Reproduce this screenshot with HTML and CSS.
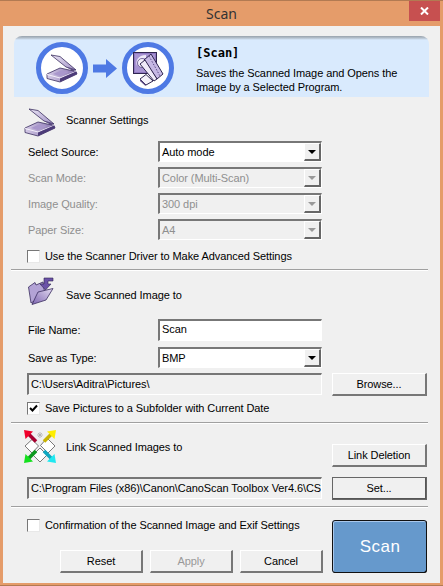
FILE: index.html
```html
<!DOCTYPE html>
<html lang="en">
<head>
<meta charset="utf-8">
<title>Scan</title>
<link rel="stylesheet" href="styles.css">
</head>
<body>
<svg class="defs" width="0" height="0" aria-hidden="true">
  <defs>
    <linearGradient id="lid" x1="0" y1="0" x2="1" y2="1"><stop offset="0" stop-color="#ebe6f5"/><stop offset="1" stop-color="#a090c6"/></linearGradient>
    <linearGradient id="body" x1="0" y1="0" x2="1" y2="0"><stop offset="0" stop-color="#d6cce8"/><stop offset="1" stop-color="#8470ac"/></linearGradient>
    <linearGradient id="folder" x1="0" y1="1" x2="1" y2="0"><stop offset="0" stop-color="#7d64b0"/><stop offset="1" stop-color="#e4dcf2"/></linearGradient>
    <g id="scanner">
      <path d="M5 1 L14 2.500 L30 16 L20 13 Z" fill="url(#lid)" stroke="#3b2f60" stroke-width=".8"/>
      <path d="M20 13 L30 16 L27 17 Z" fill="#5b4a86"/>
      <path d="M1 20 L14 14 L30 17.500 L31 20 L14 28 L1 24.500 Z" fill="url(#body)" stroke="#3a2d60" stroke-width=".8"/>
      <path d="M1 20.500 L14 24 L30 17.500" fill="none" stroke="#f3effa" stroke-width="1"/>
      <path d="M14 24.500 L14 28 L31 20 L30 17.500 Z" fill="#4c3b78"/>
      <path d="M7 20 L15 16.500 L23 18 L14 22 Z" fill="#a997cc"/>
    </g>
  </defs>
</svg>
<main class="window">
  <header class="titlebar">
    <span></span>
    <h1 class="title">Scan</h1>
    <span class="close"><svg width="9" height="8" viewBox="0 0 9 8"><path d="M1 0.500 L8 7.500 M8 0.500 L1 7.500" stroke="#fff" stroke-width="2"/></svg></span>
  </header>
  <div class="client">
    <section class="banner">
      <div class="flow">
        <span class="ring">
          <svg width="32" height="29" viewBox="0 0 32 29"><use href="#scanner"/></svg>
        </span>
        <svg class="arrow" width="24" height="19" viewBox="0 0 24 19"><path d="M0 5.500 H13 V0 L24 9.500 L13 19 V13.500 H0 Z" fill="#4e79e4"/></svg>
        <span class="ring">
          <svg width="36" height="36" viewBox="0 0 36 36">
            <rect x="3.500" y="2.500" width="23" height="21" fill="#8f78c0" stroke="#2f2550"/>
            <rect x="5" y="4" width="20" height="18" fill="#a793d2"/>
            <path d="M16 5 C8 5 5 11 7 16 C8 11 11 8 16 8 Z" fill="#eee9f8"/>
            <circle cx="12" cy="13" r="4.500" fill="#f2eefa" stroke="#4a3a78" stroke-width=".7"/>
            <path d="M14 10 L21 4 L33 24 L27 29 Z" fill="#c6b8e4" stroke="#2f2550"/>
            <path d="M19 6 L30 26" stroke="#5b4a86" stroke-width="1" stroke-dasharray="1.500 1.500"/>
            <path d="M10 14 L15 10 L27 29 L24 31 Z" fill="#efeaf8" stroke="#2f2550"/>
            <path d="M10 29 L16 24.500 L23 31 L16 35 Z" fill="#f5f2fa" stroke="#2f2550"/>
            <path d="M16 35 L10 29 L10 31 L15.500 36 Z" fill="#5b4a86"/>
          </svg>
        </span>
      </div>
      <div class="banner-text">
        <h2 class="banner-title">[Scan]</h2>
        <p class="banner-desc">Saves the Scanned Image and Opens the Image by a Selected Program.</p>
      </div>
    </section>

    <section class="group group-settings">
      <div class="group-head head-settings">
        <svg class="head-icon" width="32" height="29" viewBox="0 0 32 29"><use href="#scanner"/></svg>
        <span class="head-label label-up">Scanner Settings</span>
      </div>
      <div class="form-row">
        <label class="label">Select Source:</label>
        <div class="combo"><span class="combo-value">Auto mode</span><span class="combo-btn"><i class="tri"></i></span></div>
      </div>
      <div class="form-row is-disabled">
        <label class="label">Scan Mode:</label>
        <div class="combo"><span class="combo-value">Color (Multi-Scan)</span><span class="combo-btn"><i class="tri"></i></span></div>
      </div>
      <div class="form-row is-disabled">
        <label class="label">Image Quality:</label>
        <div class="combo"><span class="combo-value">300 dpi</span><span class="combo-btn"><i class="tri"></i></span></div>
      </div>
      <div class="form-row is-disabled">
        <label class="label">Paper Size:</label>
        <div class="combo"><span class="combo-value">A4</span><span class="combo-btn"><i class="tri"></i></span></div>
      </div>
      <div class="check-row check-driver"><span class="check"></span><span>Use the Scanner Driver to Make Advanced Settings</span></div>
    </section>
    <hr class="sep sep-1">

    <section class="group">
      <div class="group-head head-save">
        <svg class="head-icon-save" width="26" height="28" viewBox="0 0 26 28">
          <path d="M3 26 L0.500 10 L7 5.500 L8 8 L15 5 L17 18 Z" fill="#b3a3d6" stroke="#3a2d60" stroke-width=".8"/>
          <path d="M4 27.500 L10 15 L25 11.500 L18 23 Z" fill="url(#folder)" stroke="#3a2d60" stroke-width=".8"/>
          <path d="M16 1 H25 V4 H20 V7 H23 L17.500 13 L12 7 H16 Z" fill="#6b52a8" stroke="#2f2550" stroke-width=".6"/>
        </svg>
        <span class="head-label label-down">Save Scanned Image to</span>
      </div>
      <div class="form-row row-file">
        <label class="label">File Name:</label>
        <div class="textbox">Scan</div>
      </div>
      <div class="form-row row-type">
        <label class="label">Save as Type:</label>
        <div class="combo"><span class="combo-value">BMP</span><span class="combo-btn"><i class="tri"></i></span></div>
      </div>
      <div class="path-row">
        <div class="path">C:\Users\Aditra\Pictures\</div>
        <button class="btn btn-side">Browse...</button>
      </div>
      <div class="check-row check-sub"><span class="check is-checked"><svg width="9" height="9" viewBox="0 0 9 9"><path d="M1 4 L3.500 6.500 L8 1.500" fill="none" stroke="#000" stroke-width="2"/></svg></span><span>Save Pictures to a Subfolder with Current Date</span></div>
    </section>
    <hr class="sep sep-2">

    <section class="group">
      <div class="link-head">
        <div class="group-head head-link">
          <svg class="head-icon" width="32" height="33" viewBox="0 0 32 33">
            <path d="M14 3 L18 7 M18 3 L14 7 M16 2 V8 M13 5 H19" stroke="#b0b0b0" stroke-width=".8"/>
            <path d="M8 9.500 L14.500 16 L8 23 L1 16 Z" fill="#fff" stroke="#444" stroke-width=".7"/>
            <path d="M23 8 L31 16 L24 23 L16.500 15.500 Z" fill="#fff" stroke="#444" stroke-width=".7"/>
            <path d="M16 18 L23 25 L16 32 L9 25 Z" fill="#fff" stroke="#444" stroke-width=".7"/>
            <path d="M4 3.500 L12 11.500" stroke="#a80030" stroke-width="3.500"/>
            <path d="M0 0 L9 1.500 L1.500 9 Z" fill="#f0002a"/>
            <path d="M28 3.500 L20 11.500" stroke="#c9b400" stroke-width="3.500"/>
            <path d="M32 0 L23 1.500 L30.500 9 Z" fill="#ffee00"/>
            <path d="M4 29 L12 21" stroke="#0e9a20" stroke-width="3.500"/>
            <path d="M0 33 L1.500 24 L9 31.500 Z" fill="#14e01e"/>
            <path d="M28 29 L20 21" stroke="#10a8c0" stroke-width="3.500"/>
            <path d="M32 33 L30.500 24 L23 31.500 Z" fill="#1fe8f0"/>
          </svg>
          <span class="head-label">Link Scanned Images to</span>
        </div>
        <button class="btn btn-side">Link Deletion</button>
      </div>
      <div class="path-row row-link">
        <div class="path">C:\Program Files (x86)\Canon\CanoScan Toolbox Ver4.6\CS</div>
        <button class="btn btn-side is-default">Set...</button>
      </div>
    </section>
    <hr class="sep sep-3">

    <section class="footer">
      <div class="footer-left">
        <div class="check-row"><span class="check"></span><span>Confirmation of the Scanned Image and Exif Settings</span></div>
        <div class="footer-buttons">
          <button class="btn btn-foot">Reset</button>
          <button class="btn btn-foot is-off">Apply</button>
          <button class="btn btn-foot">Cancel</button>
        </div>
      </div>
      <button class="scan">Scan</button>
    </section>
  </div>
</main>
</body>
</html>
```
FILE: styles.css
```css
* { box-sizing: border-box; }
html, body { margin: 0; padding: 0; }
body {
  width: 443px;
  height: 586px;
  overflow: hidden;
  font-family: "Liberation Sans", Arial, sans-serif;
  font-size: 11px;
  letter-spacing: -0.08px;
  color: #000;
}
.defs { position: absolute; }
.window {
  width: 443px;
  height: 586px;
  background: #e59c6a;
  border-top: 1px solid #b27a52;
  border-bottom: 1px solid #b27a52;
  padding: 0 3px 2px;
  display: flex;
  flex-direction: column;
}
.titlebar {
  height: 25px;
  display: grid;
  grid-template-columns: 31px 1fr 31px;
  align-items: start;
  flex: none;
}
.title {
  margin: 0;
  text-align: center;
  font: 400 14px/25px "Noto Sans", sans-serif;
  letter-spacing: 0;
  color: #333;
}
.close {
  height: 20px;
  background: #c75050;
  display: flex;
  align-items: center;
  justify-content: center;
}
.client {
  flex: 1;
  background: #f0f0f0;
  padding: 10px 11px 0;
  display: flex;
  flex-direction: column;
}
.banner {
  height: 61px;
  width: 415px;
  flex: none;
  background: linear-gradient(#98a2ac 0, #b4c0cc 2px, #d9eafd 4px);
  border-radius: 8px 8px 0 0;
  padding: 4px 0 0 22px;
  display: flex;
  gap: 22px;
  align-items: flex-start;
}
.flow { display: flex; align-items: center; gap: 5px; margin-top: 2px; }
.ring {
  width: 52px;
  height: 52px;
  border-radius: 50%;
  border: 5px solid #4e79e4;
  background: #fff;
  display: flex;
  align-items: center;
  justify-content: center;
}
.banner-title { margin: 6px 0 7px; font: 700 12px/14px "DejaVu Sans Mono", monospace; letter-spacing: 0; }
.banner-desc { margin: 0; width: 212px; line-height: 13.500px; }
.group { flex: none; }
.group-head { display: flex; align-items: center; }
.head-settings { height: 29px; margin-top: 11px; padding-left: 10px; margin-bottom: 2px; }
.head-icon { flex: none; }
.head-label { margin-left: 10px; }
.label-up { margin-bottom: 5px; }
.label-down { margin-top: 8px; }
.form-row {
  display: flex;
  align-items: center;
  height: 25px;
  margin-bottom: 1px;
  padding-left: 14px;
}
.label { width: 130px; flex: none; }
.is-disabled .label, .is-disabled .combo { color: #8f8f8f; }
.combo, .textbox, .path {
  border-style: solid;
  border-width: 2px 1px 1px 2px;
  border-color: #777 #fff #fff #777;
}
.combo {
  width: 164px;
  height: 21px;
  background: #fff;
  display: flex;
  align-items: center;
  justify-content: space-between;
}
.is-disabled .combo { background: #f0f0f0; }
.combo-value { padding-left: 2px; }
.combo-btn {
  width: 17px;
  height: 18px;
  background: #f0f0f0;
  border: 1px solid #fff;
  border-right: 2px solid #666;
  border-bottom: 2px solid #666;
  display: flex;
  align-items: center;
  justify-content: center;
}
.tri { width: 0; height: 0; border: 4px solid transparent; border-top: 4px solid #000; border-bottom: 0; }
.is-disabled .tri { border-top-color: #999; }
.check-row { display: flex; align-items: center; gap: 5px; padding-left: 13px; height: 14px; }
.check {
  width: 13px;
  height: 13px;
  background: #fff;
  border: 1px solid #777;
  border-right-color: #e8e8e8;
  border-bottom-color: #e8e8e8;
  display: flex;
  align-items: center;
  justify-content: center;
}
.check-driver { margin-top: 7px; }
.sep { flex: none; width: 417px; height: 2px; margin: 0 0 0 -3px; border: 0; border-top: 1px solid #a0a0a0; border-bottom: 1px solid #fff; }
.sep-1 { margin-top: 6px; }
.sep-2 { margin-top: 7px; }
.sep-3 { margin-top: 6px; }
.head-save { height: 28px; margin-top: 6px; padding-left: 14px; }
.head-save .head-label { margin-left: 12px; }
.row-file { margin-top: 14px; margin-bottom: 0; height: 22px; }
.textbox { width: 164px; height: 22px; background: #fff; padding-left: 2px; line-height: 17px; }
.row-type { margin-top: 6px; margin-bottom: 0; height: 21px; }
.path-row { display: flex; justify-content: space-between; padding-left: 13px; width: 413px; margin-top: 5px; }
.path { width: 295px; height: 22px; background: #f0f0f0; padding-left: 2px; line-height: 18px; white-space: nowrap; overflow: hidden; }
.btn {
  font: inherit;
  letter-spacing: inherit;
  color: #000;
  background: #f0f0f0;
  padding: 0;
  height: 23px;
  border: 1px solid #fff;
  border-right: 2px solid #777;
  border-bottom: 2px solid #777;
}
.btn-side { width: 95px; }
.is-default { outline: 1px solid #666; outline-offset: -1px; border-right-color: #555; border-bottom-color: #555; }
.check-sub { margin-top: 5px; }
.link-head { display: flex; justify-content: space-between; align-items: flex-start; width: 413px; margin-top: 6px; height: 37px; }
.head-link { height: 33px; padding-left: 10px; }
.link-head .btn { margin-top: 14px; }
.row-link { margin-top: 10px; }
.footer { flex: none; display: flex; justify-content: space-between; width: 413px; margin-top: 10px; }
.footer-left { display: flex; flex-direction: column; }
.footer-buttons { display: flex; gap: 7px; padding-left: 46px; margin-top: 18px; }
.btn-foot { width: 83px; }
.is-off { color: #999; }
.scan {
  width: 95px;
  height: 53px;
  margin-top: 2px;
  background: #6699cc;
  color: #fff;
  font: 400 17px "Liberation Sans", sans-serif;
  letter-spacing: .5px;
  border: 1px solid #111;
  border-top: 2px solid #a9c8ec;
  border-left: 2px solid #a9c8ec;
  border-radius: 3px;
  outline: 1px solid #111;
  outline-offset: -1px;
}
```
